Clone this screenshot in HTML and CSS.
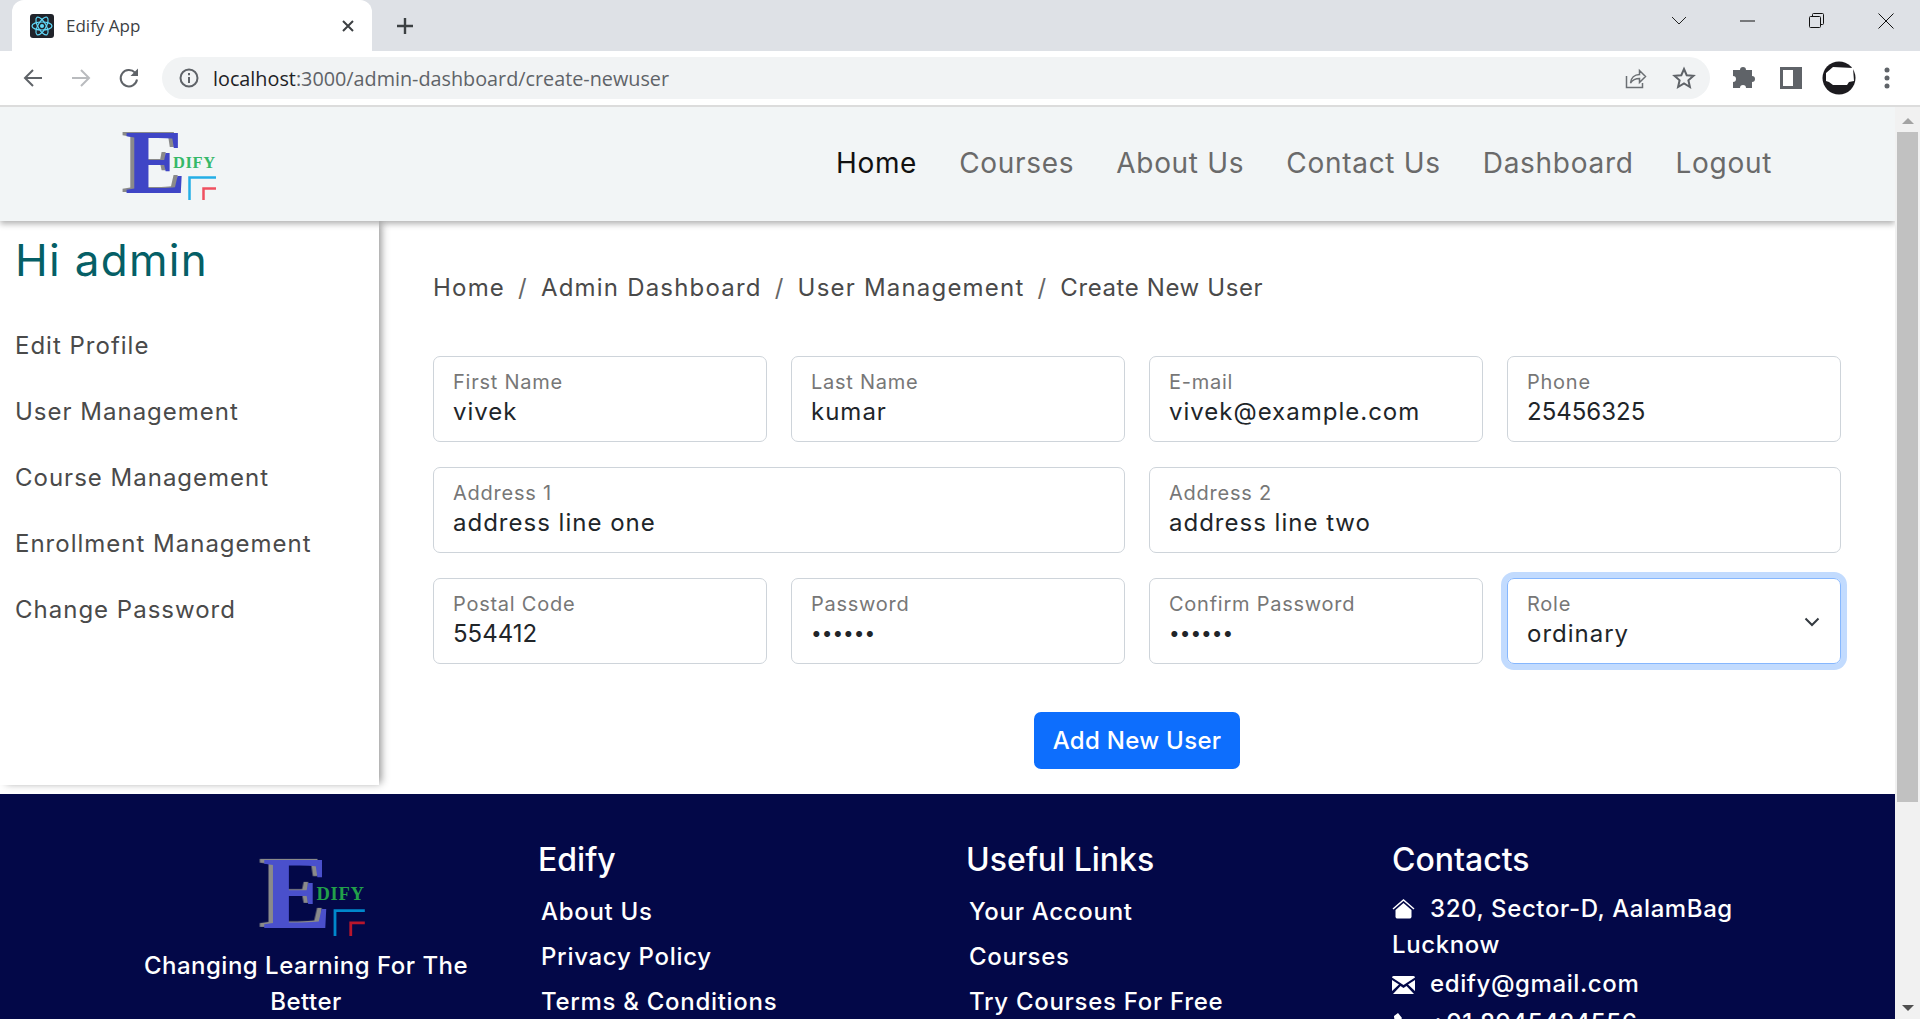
FILE: index.html
```html
<!DOCTYPE html>
<html lang="en">

<head>
    <meta charset="UTF-8">
    <meta name="viewport" content="width=device-width, initial-scale=1.0">
    <title>Edify App</title>
    <link rel="stylesheet" href="styles.css">
</head>

<body>
    <!-- browser frame -->
    <div class="tab-strip">
        <div class="tab">
            <svg class="favicon" viewBox="0 0 24 24">
                <rect width="24" height="24" rx="3" fill="#20232a" />
                <g fill="none" stroke="#61dafb" stroke-width="1.2">
                    <ellipse cx="12" cy="12" rx="10" ry="4" />
                    <ellipse cx="12" cy="12" rx="10" ry="4" transform="rotate(60 12 12)" />
                    <ellipse cx="12" cy="12" rx="10" ry="4" transform="rotate(120 12 12)" />
                </g>
                <circle cx="12" cy="12" r="2" fill="#61dafb" />
            </svg>
            <span class="tab-title">Edify App</span>
            <svg class="tab-close" viewBox="0 0 16 16">
                <path d="M3 3l10 10M13 3L3 13" stroke="#3c4043" stroke-width="2" fill="none" />
            </svg>
        </div>
        <svg class="new-tab" viewBox="0 0 20 20">
            <path d="M10 2v16M2 10h16" stroke="#3c4043" stroke-width="2.4" fill="none" />
        </svg>
        <div class="window-controls">
            <div class="window-btn">
                <svg width="16" height="10" viewBox="0 0 16 10"><path d="M1 1l7 7 7-7" stroke="#222" fill="none" /></svg>
            </div>
            <div class="window-btn">
                <svg width="16" height="2" viewBox="0 0 16 2"><path d="M0 1h15" stroke="#111" fill="none" /></svg>
            </div>
            <div class="window-btn">
                <svg width="16" height="16" viewBox="0 0 16 16">
                    <rect x="0.5" y="3.5" width="11" height="11" rx="1" fill="none" stroke="#111" />
                    <path d="M3.5 3V1.5a1 1 0 0 1 1-1h9a1 1 0 0 1 1 1v9a1 1 0 0 1-1 1H12" fill="none" stroke="#111" />
                </svg>
            </div>
            <div class="window-btn">
                <svg width="16" height="16" viewBox="0 0 16 16"><path d="M.5.5l15 15M15.500.5l-15 15" stroke="#111" fill="none" /></svg>
            </div>
        </div>
    </div>

    <div class="toolbar">
        <div class="tool-btn">
            <svg width="22" height="22" viewBox="0 0 22 22"><path d="M20 11H3M11 3l-8 8 8 8" stroke="#5f6368" stroke-width="2" fill="none" /></svg>
        </div>
        <div class="tool-btn">
            <svg width="22" height="22" viewBox="0 0 22 22"><path d="M2 11h17M11 3l8 8-8 8" stroke="#b9bbbe" stroke-width="2" fill="none" /></svg>
        </div>
        <div class="tool-btn">
            <svg width="24" height="24" viewBox="0 0 24 24">
                <path d="M20 13.500a8.200 8.200 0 1 1-2-6.800" stroke="#5f6368" stroke-width="2" fill="none" />
                <path d="M21 2.500v7.500h-7.500z" fill="#5f6368" />
            </svg>
        </div>
        <div class="omnibox">
            <svg class="omni-info" width="22" height="22" viewBox="0 0 22 22">
                <circle cx="11" cy="11" r="8.500" stroke="#5f6368" stroke-width="2" fill="none" />
                <path d="M11 10v6M11 6v2.200" stroke="#5f6368" stroke-width="2" fill="none" />
            </svg>
            <span class="url"><span class="url-host">localhost</span>:3000/admin-dashboard/create-newuser</span>
            <svg class="omni-share" width="24" height="24" viewBox="0 0 24 24">
                <path d="M3.500 10v11.500h16V17" stroke="#6b6f73" stroke-width="1.500" fill="none" />
                <path d="M7.500 17c.5-5 4-8.500 9-8.500V4.500l6 6-6 6v-4c-4 0-7 1.500-9 4.500z" stroke="#6b6f73" stroke-width="1.500" fill="none" />
            </svg>
            <svg class="omni-star" width="24" height="24" viewBox="0 0 24 24">
                <path d="M12 3l2.700 6.200 6.800.6-5.100 4.500 1.500 6.700-5.900-3.500L6.100 21l1.500-6.700-5.100-4.500 6.800-.6z" stroke="#5f6368" stroke-width="2" fill="none" />
            </svg>
        </div>
        <div class="tool-btn">
            <svg width="24" height="24" viewBox="0 0 24 24">
                <path d="M9 4a3 3 0 0 1 6 0h6v6a3 3 0 0 1 0 6v6h-6a3 3 0 0 0-6 0H2v-6a3 3 0 0 0 0-6V4z" fill="#5f6368" />
            </svg>
        </div>
        <div class="tool-btn">
            <svg width="22" height="22" viewBox="0 0 22 22">
                <path fill-rule="evenodd" d="M0 0h22v22H0zM3 3v16h10V3z" fill="#5f6368" />
            </svg>
        </div>
        <div class="tool-btn">
            <svg width="34" height="34" viewBox="0 0 34 34">
                <circle cx="17" cy="17" r="16.500" fill="#1c1b1f" />
                <path d="M4 12l7-6 20 1 1 13-5 1-2 3-14 0-4-3-3-1z" fill="#fff" />
            </svg>
        </div>
        <div class="tool-btn">
            <svg width="6" height="24" viewBox="0 0 6 24">
                <circle cx="3" cy="4" r="2.500" fill="#5f6368" />
                <circle cx="3" cy="12" r="2.500" fill="#5f6368" />
                <circle cx="3" cy="20" r="2.500" fill="#5f6368" />
            </svg>
        </div>
    </div>

    <div class="viewport">
        <div class="page">
            <header class="navbar">
                <svg class="logo" viewBox="0 0 95 72">
                    <text class="logo-e" x="3" y="64">E</text>
                    <text class="logo-dify" x="51" y="39">DIFY</text>
                    <path class="logo-cyan" d="M67.500 71V48.500H94" />
                    <path class="logo-red" d="M81.500 71V59.500H94" />
                </svg>
                <nav class="nav-links">
                    <a class="nav-link active" href="#">Home</a>
                    <a class="nav-link" href="#">Courses</a>
                    <a class="nav-link" href="#">About Us</a>
                    <a class="nav-link" href="#">Contact Us</a>
                    <a class="nav-link" href="#">Dashboard</a>
                    <a class="nav-link" href="#">Logout</a>
                </nav>
            </header>

            <div class="content">
                <aside class="sidebar">
                    <h2 class="greeting">Hi admin</h2>
                    <a class="side-link" href="#">Edit Profile</a>
                    <a class="side-link" href="#">User Management</a>
                    <a class="side-link" href="#">Course Management</a>
                    <a class="side-link" href="#">Enrollment Management</a>
                    <a class="side-link" href="#">Change Password</a>
                </aside>

                <main class="main">
                    <div class="breadcrumb">
                        <a href="#">Home</a><span class="crumb-sep">/</span>
                        <a href="#">Admin Dashboard</a><span class="crumb-sep">/</span>
                        <a href="#">User Management</a><span class="crumb-sep">/</span>
                        <span class="crumb-current">Create New User</span>
                    </div>

                    <form class="user-form">
                        <div class="field">
                            <label for="first">First Name</label>
                            <input id="first" type="text" value="vivek">
                        </div>
                        <div class="field">
                            <label for="last">Last Name</label>
                            <input id="last" type="text" value="kumar">
                        </div>
                        <div class="field">
                            <label for="email">E-mail</label>
                            <input id="email" type="text" value="vivek@example.com">
                        </div>
                        <div class="field numeric">
                            <label for="phone">Phone</label>
                            <input id="phone" type="text" value="25456325">
                        </div>
                        <div class="field wide">
                            <label for="address1">Address 1</label>
                            <input id="address1" type="text" value="address line one">
                        </div>
                        <div class="field wide">
                            <label for="address2">Address 2</label>
                            <input id="address2" type="text" value="address line two">
                        </div>
                        <div class="field numeric">
                            <label for="postal">Postal Code</label>
                            <input id="postal" type="text" value="554412">
                        </div>
                        <div class="field secret">
                            <label for="password">Password</label>
                            <input id="password" type="password" value="secret">
                        </div>
                        <div class="field secret">
                            <label for="confirm">Confirm Password</label>
                            <input id="confirm" type="password" value="secret">
                        </div>
                        <div class="field focused">
                            <label for="role">Role</label>
                            <select id="role">
                                <option>ordinary</option>
                            </select>
                            <svg class="select-arrow" width="16" height="10" viewBox="0 0 16 10">
                                <path d="M1.500 1.500L8 8l6.500-6.500" stroke="#343a40" stroke-width="2" fill="none" />
                            </svg>
                        </div>
                        <button class="submit-btn" type="button">Add New User</button>
                    </form>
                </main>
            </div>

            <footer class="footer">
                <div class="footer-col footer-brand">
                    <svg class="logo-footer" viewBox="0 0 95 72">
                        <text class="logo-e" x="3" y="64">E</text>
                        <text class="logo-dify" x="51" y="39">DIFY</text>
                        <path class="logo-cyan" d="M67.500 71V48.500H94" />
                        <path class="logo-red" d="M81.500 71V59.500H94" />
                    </svg>
                    <p class="tagline">Changing Learning For The Better</p>
                </div>
                <div class="footer-col">
                    <h3>Edify</h3>
                    <a href="#">About Us</a>
                    <a href="#">Privacy Policy</a>
                    <a href="#">Terms &amp; Conditions</a>
                </div>
                <div class="footer-col">
                    <h3>Useful Links</h3>
                    <a href="#">Your Account</a>
                    <a href="#">Courses</a>
                    <a href="#">Try Courses For Free</a>
                </div>
                <div class="footer-col contacts">
                    <h3>Contacts</h3>
                    <p>
                        <svg class="contact-icon" width="23" height="20" viewBox="0 0 23 20">
                            <path d="M1 10L11.500 1 22 10" stroke="#fff" stroke-width="1.500" fill="none" />
                            <path d="M3.500 11l8-7 8 7v7a2 2 0 0 1-2 1.500h-12a2 2 0 0 1-2-1.500z" fill="#fff" />
                        </svg>
                        320, Sector-D, AalamBag Lucknow
                    </p>
                    <p>
                        <svg class="contact-icon" width="23" height="18" viewBox="0 0 23 18">
                            <path d="M0 1.500A1.500 1.500 0 0 1 1.500 0h20A1.500 1.500 0 0 1 23 1.500L11.500 9z" fill="#fff" />
                            <path d="M0 4v11l7-6.500zM23 4v11l-7-6.500zM8.500 10l3 2 3-2 7.500 8H1z" fill="#fff" />
                        </svg>
                        edify@gmail.com
                    </p>
                    <p>
                        <svg class="contact-icon" width="23" height="20" viewBox="0 0 23 20">
                            <path d="M6 0l4 5-2 3 5 6 3-2 5 4-3 4C9 20 2 10 2 3z" fill="#fff" />
                        </svg>
                        +91 8945424556
                    </p>
                </div>
            </footer>
        </div>

        <div class="scrollbar">
            <span class="arrow-up"></span>
            <div class="scroll-thumb"></div>
            <span class="arrow-down"></span>
        </div>
    </div>
</body>

</html>
```
FILE: styles.css
```css
* {
    box-sizing: border-box;
}

body {
    font-family: Inter, "Open Sans", sans-serif;
    background-color: #fff;
    margin: 0;
    height: 100vh;
    overflow: hidden;
    display: flex;
    flex-direction: column;
}

a {
    color: inherit;
    text-decoration: none;
}

/* browser frame */
.tab-strip {
    height: 51px;
    flex-shrink: 0;
    background-color: #dee1e6;
    padding-left: 12px;
    display: flex;
    align-items: center;
}

.tab {
    width: 360px;
    height: 51px;
    background-color: #fff;
    border-radius: 12px 12px 0 0;
    padding: 0 16px 0 18px;
    display: flex;
    align-items: center;
    font-family: "Open Sans", sans-serif;
    font-size: 17px;
    color: #3c4043;
}

.favicon {
    width: 24px;
    height: 24px;
    margin-right: 12px;
}

.tab-title {
    flex: 1;
}

.tab-close {
    width: 16px;
    height: 16px;
}

.new-tab {
    width: 20px;
    height: 20px;
    margin-left: 23px;
}

.window-controls {
    margin-left: auto;
    display: flex;
}

.window-btn {
    width: 69px;
    height: 42px;
    margin-bottom: 9px;
    display: flex;
    align-items: center;
    justify-content: center;
}

.toolbar {
    height: 56px;
    flex-shrink: 0;
    background-color: #fff;
    border-bottom: 2px solid #dcdcdc;
    padding: 0 9px;
    display: flex;
    align-items: center;
}

.tool-btn {
    width: 48px;
    height: 48px;
    flex-shrink: 0;
    display: flex;
    align-items: center;
    justify-content: center;
}

.omnibox {
    flex: 1;
    height: 42px;
    margin: 0 9px;
    padding: 0 14px 0 16px;
    background-color: #f1f3f4;
    border-radius: 21px;
    display: flex;
    align-items: center;
    font-family: "Open Sans", sans-serif;
    font-size: 19.8px;
    color: #5f6368;
}

.omni-info {
    margin-right: 13px;
}

.url {
    flex: 1;
}

.url-host {
    color: #202124;
}

.omni-share {
    margin-right: 25px;
}

/* page */
.viewport {
    flex: 1;
    min-height: 0;
    display: flex;
}

.page {
    flex: 1;
    min-width: 0;
    overflow: hidden;
}

.navbar {
    height: 114px;
    background-color: #f2f5f6;
    padding: 0 123px 0 122px;
    display: flex;
    align-items: center;
    justify-content: space-between;
    position: relative;
    z-index: 2;
    box-shadow: 0 3px 6px rgba(0, 0, 0, 0.3);
}

.logo {
    width: 95px;
    height: 72px;
    margin-top: 1px;
    overflow: visible;
}

.logo-e {
    font-family: "Liberation Serif", serif;
    font-weight: bold;
    font-size: 92px;
    fill: #3f45c6;
    filter: drop-shadow(-4px -1px 0 #8a8a8a);
}

.logo-dify {
    font-family: "Liberation Serif", serif;
    font-weight: bold;
    font-size: 16.5px;
    letter-spacing: 0.6px;
    fill: #35b868;
}

.logo-cyan,
.logo-red {
    fill: none;
    stroke-width: 2.5;
}

.logo-cyan {
    stroke: #25aee6;
}

.logo-red {
    stroke: #ef5060;
}

.nav-links {
    display: flex;
    gap: 42px;
    margin-top: -2px;
}

.nav-link {
    font-size: 28px;
    letter-spacing: 0.7px;
    color: #6a6a6a;
}

.nav-link.active {
    color: #111;
}

.content {
    display: flex;
    height: 573px;
}

.sidebar {
    width: 379px;
    height: 564px;
    flex-shrink: 0;
    padding: 14px 15px 0;
    display: flex;
    flex-direction: column;
    box-shadow: 4px 0 8px -2px rgba(0, 0, 0, 0.45);
}

.greeting {
    font-size: 44px;
    line-height: 50px;
    font-weight: 400;
    letter-spacing: 1.3px;
    color: #055f66;
    margin: 0 0 43px;
}

.side-link {
    font-size: 24px;
    line-height: 36px;
    letter-spacing: 1px;
    color: #4a4a4a;
    margin-bottom: 30px;
}

.main {
    flex: 1;
    min-width: 0;
    padding: 49px 54px 0 54px;
}

.breadcrumb {
    font-size: 24px;
    line-height: 36px;
    letter-spacing: 1.2px;
    color: #4a4a4a;
    margin-bottom: 50px;
    display: flex;
}

.crumb-sep {
    margin: 0 13px;
    color: #666;
}

.crumb-current {
    letter-spacing: 0.6px;
}

.user-form {
    display: grid;
    grid-template-columns: repeat(4, 1fr);
    column-gap: 24px;
    row-gap: 25px;
}

.field {
    height: 86px;
    padding: 13px 19px 0;
    border: 1px solid #ced4da;
    border-radius: 7px;
    display: flex;
    flex-direction: column;
    position: relative;
}

.field.wide {
    grid-column: span 2;
}

.field.focused {
    border-color: #86b7fe;
    box-shadow: 0 0 0 6px #c2dbfe;
}

.field label {
    font-size: 20px;
    line-height: 24px;
    letter-spacing: 0.75px;
    color: #777;
}

.field input,
.field select {
    border: none;
    outline: none;
    padding: 0;
    margin-top: 2px;
    height: 30px;
    width: 100%;
    background: none;
    font-family: inherit;
    font-size: 24px;
    letter-spacing: 1px;
    color: #212529;
    appearance: none;
}

.field.numeric input {
    letter-spacing: 0;
}

.field.secret input {
    font-size: 19px;
    letter-spacing: 0;
}

.select-arrow {
    position: absolute;
    right: 20px;
    top: 38px;
}

.submit-btn {
    grid-column: 1 / -1;
    justify-self: center;
    width: 206px;
    height: 57px;
    margin-top: 23px;
    background-color: #0d6efd;
    color: #fff;
    border: none;
    border-radius: 7px;
    font-family: inherit;
    font-size: 24px;
    font-weight: 500;
    letter-spacing: 0.3px;
}

/* footer */
.footer {
    height: 400px;
    background-color: #030848;
    color: #fff;
    padding: 42px 0 0 92px;
    display: grid;
    grid-template-columns: 428px 428px 426px 428px;
}

.footer-col {
    padding: 0 18px;
    display: flex;
    flex-direction: column;
    align-items: flex-start;
}

.footer-col h3 {
    font-size: 32px;
    line-height: 48px;
    font-weight: 500;
    margin: 0 0 10px;
}

.footer-col a {
    font-size: 24px;
    line-height: 36px;
    font-weight: 500;
    letter-spacing: 0.7px;
    margin: 0 0 9px 3px;
}

.footer-brand {
    align-items: center;
    text-align: center;
}

.logo-footer {
    width: 107px;
    height: 81px;
    margin: 20px 0 0 12px;
    overflow: visible;
}

.logo-footer .logo-e {
    fill: #4a50cc;
}

.logo-footer .logo-dify {
    fill: #22a04a;
}

.logo-footer .logo-cyan {
    stroke: #0088cc;
}

.logo-footer .logo-red {
    stroke: #b8162c;
}

.tagline {
    width: 340px;
    margin: 11px 0 0;
    font-size: 24px;
    line-height: 36px;
    font-weight: 500;
    letter-spacing: 0.5px;
}

.footer-col.contacts h3 {
    margin-bottom: 7px;
}

.contacts p {
    margin: 0 0 3px;
    font-size: 24px;
    line-height: 36px;
    font-weight: 500;
    letter-spacing: 0.6px;
}

.contact-icon {
    margin-right: 8px;
    vertical-align: -2px;
}

.scrollbar {
    width: 25px;
    flex-shrink: 0;
    background-color: #f1f1f1;
    display: flex;
    flex-direction: column;
    align-items: center;
    padding: 11px 0 8px;
}

.scroll-thumb {
    width: 21px;
    height: 670px;
    margin-top: 8px;
    background-color: #c1c1c1;
}

.arrow-up,
.arrow-down {
    width: 0;
    height: 0;
    border-left: 6px solid transparent;
    border-right: 6px solid transparent;
}

.arrow-up {
    border-bottom: 6px solid #a3a3a3;
}

.arrow-down {
    border-top: 6px solid #505050;
    margin-top: auto;
}
```
